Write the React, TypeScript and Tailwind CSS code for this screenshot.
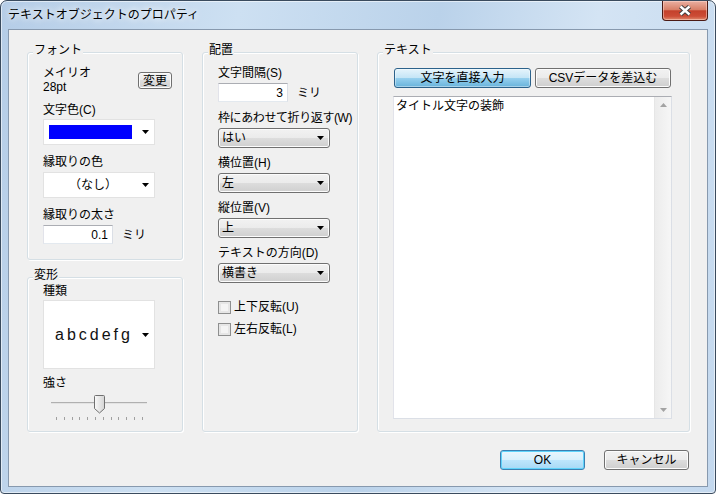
import type { ReactNode } from "react";

const BTN =
	"rounded-[3px] border border-[#707070] bg-[linear-gradient(to_bottom,#f2f2f2_0%,#ebebeb_50%,#dddddd_50%,#cfcfcf_100%)] shadow-[inset_0_0_0_1px_#fcfcfc]";

function Arrow({ color = "#000" }: { color?: string }) {
	return (
		<svg width="7" height="4" viewBox="0 0 7 4" className="shrink-0">
			<path d="M0 0h7L3.5 4z" fill={color} />
		</svg>
	);
}

function Group({
	label,
	className,
	children,
}: {
	label: string;
	className: string;
	children: ReactNode;
}) {
	return (
		<div
			className={`relative rounded-[3px] border border-[#d5dfe5] shadow-[inset_1px_1px_0_#fff,1px_1px_0_#fff] ${className}`}
		>
			<span className="absolute -top-[10px] left-[5px] bg-[#f0f0f0] px-[1px] leading-[14px]">
				{label}
			</span>
			{children}
		</div>
	);
}

function Combo({ value }: { value: string }) {
	return (
		<div
			className={`${BTN} flex h-[20px] w-[112px] items-center justify-between pl-[3px] pr-[5px] leading-[14px]`}
		>
			<span>{value}</span>
			<Arrow />
		</div>
	);
}

function Field({ value }: { value: string }) {
	return (
		<div className="flex h-[19px] w-[70px] items-center justify-end border border-[#e3e9ef] border-t-[#abadb3] border-l-[#e2e3ea] border-r-[#dbdfe6] bg-white pr-[4px] leading-[14px]">
			{value}
		</div>
	);
}

function Check({ label }: { label: string }) {
	return (
		<div className="flex items-center gap-[3px] leading-[14px]">
			<div className="h-[13px] w-[13px] border border-[#8e8f8f] bg-[#f4f4f4] shadow-[inset_0_0_0_2px_#e6e6e6]" />
			<span>{label}</span>
		</div>
	);
}

function Slider() {
	const ticks = Array.from({ length: 12 }, (_, i) => 13 + i * 7.8);
	return (
		<svg width="112" height="30" viewBox="0 0 112 30">
			<line x1="8" y1="10.5" x2="104" y2="10.5" stroke="#b0b0b0" />
			<line x1="8" y1="11.5" x2="104" y2="11.5" stroke="#e3e3e3" />
			{ticks.map((x) => (
				<line
					key={x}
					x1={Math.round(x) + 0.5}
					y1="25"
					x2={Math.round(x) + 0.5}
					y2="28"
					stroke="#a0a0a0"
				/>
			))}
			<defs>
				<linearGradient id="thumb" x1="0" y1="0" x2="1" y2="0">
					<stop offset="0" stopColor="#fafafa" />
					<stop offset="1" stopColor="#d4d4d4" />
				</linearGradient>
			</defs>
			<path
				d="M51.5 4.5a1 1 0 0 1 1-1h8a1 1 0 0 1 1 1v12l-5 4.5-5-4.5z"
				fill="url(#thumb)"
				stroke="#707070"
			/>
		</svg>
	);
}

function Button({
	children,
	className,
}: {
	children: ReactNode;
	className: string;
}) {
	return (
		<div
			className={`flex h-[20px] items-center justify-center leading-[14px] ${className}`}
		>
			{children}
		</div>
	);
}

export default function App() {
	return (
		<div className="h-[494px] w-[716px] font-['Liberation_Sans','Noto_Sans_CJK_JP',sans-serif] text-[12px] text-black">
			<div className="flex h-full w-full flex-col rounded-t-[7px] rounded-b-[4px] border border-[#3a4b5e] bg-[linear-gradient(100deg,#b5cde7_0%,#cde0f2_30%,#bad2ea_55%,#d4e4f4_75%,#c3d8ee_100%)] shadow-[inset_0_0_0_1px_rgba(255,255,255,0.55)]">
				<div className="flex h-[28px] shrink-0 items-start justify-between pl-[7px] pr-[7px]">
					<span className="mt-[7px] leading-[14px] [text-shadow:0_0_6px_#fff,0_0_10px_#fff]">
						テキストオブジェクトのプロパティ
					</span>
					<div className="flex h-[20px] w-[46px] items-center justify-center rounded-b-[4px] border border-t-0 border-[#4b1a14] bg-[linear-gradient(to_bottom,#eab0a2_0%,#d98068_45%,#c4412c_52%,#cc4c36_80%,#e08a6d_100%)] shadow-[inset_0_0_0_1px_rgba(255,220,210,0.5)]">
						<svg width="14" height="11" viewBox="0 0 14 11">
							<path
								d="M2.5 1.5 11.5 9.5M11.5 1.5 2.5 9.5"
								stroke="#3c3c3c"
								strokeWidth="4.4"
							/>
							<path
								d="M2.5 1.5 11.5 9.5M11.5 1.5 2.5 9.5"
								stroke="#fff"
								strokeWidth="2.4"
							/>
						</svg>
					</div>
				</div>

				<div className="mx-[7px] mb-[6px] flex flex-1 flex-col border border-[#8799ae] bg-[#f0f0f0]">
					<div className="flex gap-[19px] pl-[18px] pt-[22px]">
						<div className="flex flex-col gap-[17px]">
							<Group label="フォント" className="h-[208px] w-[156px] pl-[15px] pt-[13px]">
								<div className="flex items-start justify-between pr-[10px]">
									<div className="leading-[14px]">
										<div>メイリオ</div>
										<div>28pt</div>
									</div>
									<div
										className={`${BTN} mt-[6px] flex h-[17px] w-[34px] items-center justify-center leading-[14px]`}
									>
										変更
									</div>
								</div>
								<div className="mt-[9px] leading-[14px]">文字色(C)</div>
								<div className="mt-[2px] flex h-[26px] w-[112px] items-center justify-between border border-[#e2e2e2] bg-white pl-[5px] pr-[5px]">
									<div className="h-[14px] w-[83px] bg-[#0000ff]" />
									<Arrow />
								</div>
								<div className="mt-[10px] leading-[14px]">縁取りの色</div>
								<div className="mt-[3px] flex h-[26px] w-[112px] items-center justify-between border border-[#e2e2e2] bg-white pl-[25px] pr-[5px] leading-[14px]">
									<span>（なし）</span>
									<Arrow />
								</div>
								<div className="mt-[10px] leading-[14px]">縁取りの太さ</div>
								<div className="mt-[3px] flex items-center gap-[9px] leading-[14px]">
									<Field value="0.1" />
									<span>ミリ</span>
								</div>
							</Group>

							<Group label="変形" className="h-[155px] w-[156px] pl-[15px] pt-[6px]">
								<div className="leading-[14px]">種類</div>
								<div className="mt-[2px] flex h-[69px] w-[112px] items-center justify-between border border-[#e2e2e2] bg-white pl-[11px] pr-[5px]">
									<span className="text-[16px] font-medium leading-[16px] tracking-[3px] text-[#111]">
										abcdefg
									</span>
									<Arrow />
								</div>
								<div className="mt-[7px] leading-[14px]">強さ</div>
								<div className="mt-[2px]">
									<Slider />
								</div>
							</Group>
						</div>

						<Group label="配置" className="h-[380px] w-[156px] pl-[15px] pt-[13px]">
							<div className="leading-[14px]">文字間隔(S)</div>
							<div className="mt-[3px] flex items-center gap-[9px] leading-[14px]">
								<Field value="3" />
								<span>ミリ</span>
							</div>
							<div className="mt-[9px] whitespace-nowrap leading-[14px] tracking-[-0.4px]">
								枠にあわせて折り返す(W)
							</div>
							<div className="mt-[3px]">
								<Combo value="はい" />
							</div>
							<div className="mt-[8px] leading-[14px]">横位置(H)</div>
							<div className="mt-[3px]">
								<Combo value="左" />
							</div>
							<div className="mt-[8px] leading-[14px]">縦位置(V)</div>
							<div className="mt-[3px]">
								<Combo value="上" />
							</div>
							<div className="mt-[8px] leading-[14px]">テキストの方向(D)</div>
							<div className="mt-[3px]">
								<Combo value="横書き" />
							</div>
							<div className="mt-[17px]">
								<Check label="上下反転(U)" />
							</div>
							<div className="mt-[8px]">
								<Check label="左右反転(L)" />
							</div>
						</Group>

						<Group label="テキスト" className="h-[380px] w-[313px] pl-[15px] pt-[15px]">
							<div className="ml-[1px] flex gap-[4px]">
								<Button className="w-[137px] rounded-[3px] border border-[#2c628b] bg-[linear-gradient(to_bottom,#e5f4fc_0%,#c4e5f6_50%,#98d1ef_50%,#68b3db_100%)] shadow-[inset_0_0_0_1px_rgba(255,255,255,0.4)]">
									文字を直接入力
								</Button>
								<Button className={`${BTN} w-[136px]`}>CSVデータを差込む</Button>
							</div>
							<div className="mt-[8px] flex h-[323px] w-[279px] border border-[#dbdfe6] border-t-[#abadb3] border-l-[#e2e3ea] bg-white">
								<div className="flex-1 pl-[2px] pt-[2px] leading-[14px]">
									タイトル文字の装飾
								</div>
								<div className="flex w-[17px] flex-col items-center justify-between border-l border-[#e6e6e6] bg-[linear-gradient(to_right,#ececec,#f6f6f6)] pb-[6px] pt-[6px]">
									<svg width="7" height="4" viewBox="0 0 7 4">
										<path d="M0 4h7L3.5 0z" fill="#a3a3a3" />
									</svg>
									<Arrow color="#a3a3a3" />
								</div>
							</div>
						</Group>
					</div>

					<div className="mt-[18px] flex justify-end gap-[19px] pr-[18px]">
						<Button className="w-[85px] rounded-[3px] border border-[#3c7fb1] bg-[linear-gradient(to_bottom,#eaf6fd_0%,#d9f0fc_50%,#bee6fd_50%,#a7d9f5_100%)] shadow-[inset_0_0_0_1px_#5fd3fb]">
							OK
						</Button>
						<Button className={`${BTN} w-[85px]`}>キャンセル</Button>
					</div>
				</div>
			</div>
		</div>
	);
}
